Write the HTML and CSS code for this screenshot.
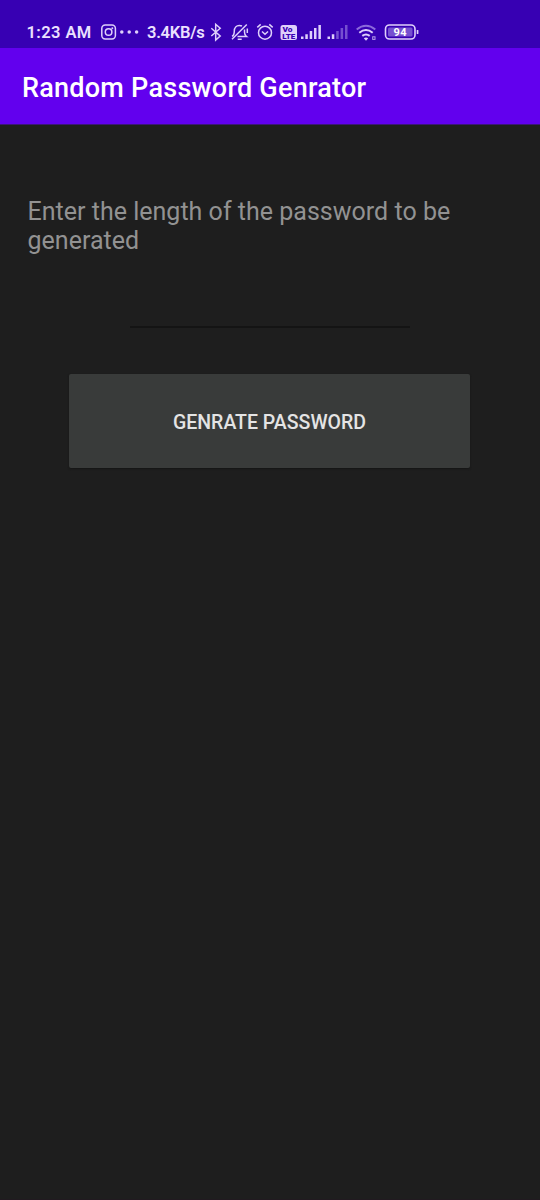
FILE: index.html
```html
<!DOCTYPE html>
<html lang="en">
<head>
<meta charset="utf-8">
<title>Random Password Genrator</title>
<link rel="stylesheet" href="styles.css">
</head>
<body>
<header class="status">
  <span class="clock">1:23 AM</span>
  <svg class="notices" width="40" height="18" viewBox="100 23 40 18">
    <g class="line">
      <rect x="101.8" y="25" width="13.6" height="14" rx="3.4"/>
      <circle cx="108.6" cy="32" r="3.3"/>
    </g>
    <g class="fill">
      <circle cx="112.3" cy="28.2" r="1"/>
      <circle cx="121.8" cy="32" r="1.75"/>
      <circle cx="129.2" cy="32" r="1.75"/>
      <circle cx="136.6" cy="32" r="1.75"/>
    </g>
  </svg>
  <span class="speed">3.4KB/s</span>
  <svg class="symbols" width="212" height="20" viewBox="209 22 212 20">
    <path class="line" d="M211.3 28.3l8.9 7.7-4.5 4V24.300l4.500 4-8.900 7.700"/>
    <g class="line">
      <path d="M232 39.300 246.800 24.500M232 36.300c2-.8 2.300-2.500 2.300-5.300 0-3.500 2.200-5.600 5-5.600 1 0 1.900.2 2.700.6M244.500 29.500v2.800c0 2 .4 3 2 4.200H237.500M237.700 39.300h4M247.300 28.500v4.500"/>
    </g>
    <g class="line">
      <circle cx="265" cy="32.700" r="6.500"/>
      <path d="M257.300 27.400l3.400-3M272.700 27.400l-3.400-3M262 31.500l3 2.800 3-2.800"/>
    </g>
    <rect class="fill" x="280.500" y="25" width="16.500" height="15" rx="2.500"/>
    <text class="volte" x="282.500" y="31.700" textLength="10" lengthAdjust="spacingAndGlyphs">Vo</text>
    <text class="volte" x="282.300" y="38.500" textLength="13" lengthAdjust="spacingAndGlyphs">LTE</text>
    <g class="fill">
      <path d="M301 36.500h2.500v2.500h-2.500zM305.300 34.300h2.500V39h-2.500zM309.700 31h2.500v8h-2.500zM314 28h2.500v11H314zM318.400 25h2.500v14h-2.500z"/>
      <path d="M327.500 36.500h2.500v2.500h-2.500zM331.800 34.300h2.500V39h-2.500z"/>
      <path class="faint" d="M336.200 31h2.500v8h-2.500zM340.600 28h2.500v11h-2.500zM345 25h2.500v14H345z"/>
    </g>
    <g class="wifi">
      <path class="dim" d="M356.700 29.500q9.300-7.500 18.600 0"/>
      <path d="M359.300 32.700q6.700-5.400 13.400 0M362.300 35.900q3.700-2.900 7.400 0"/>
    </g>
    <path class="fill" d="M363.800 38.300q2.200-1.700 4.400 0l-2.200 2.400z"/>
    <rect class="tiny" x="372.700" y="36.800" width="2.300" height="2.600"/>
    <rect class="battery" x="385.500" y="25" width="29.500" height="14" rx="4"/>
    <rect class="charge" x="388" y="27.500" width="24.500" height="9" rx="1.500"/>
    <text class="level" x="393.500" y="36.200" textLength="13">94</text>
    <rect class="fill" x="416.700" y="30" width="1.700" height="4" rx=".5"/>
  </svg>
</header>
<div class="appbar"><h1>Random Password Genrator</h1></div>
<main class="content">
  <label class="prompt" for="length">Enter the length of the password to be generated</label>
  <input class="length" id="length" type="text" inputmode="numeric">
  <button class="generate" type="button">GENRATE PASSWORD</button>
</main>
</body>
</html>
```
FILE: styles.css
```css
* { box-sizing: border-box; }
body {
  margin: 0;
  min-height: 1200px;
  display: flex;
  flex-direction: column;
  background: #1e1e1e;
  font-family: Roboto, sans-serif;
}
.status {
  height: 48px;
  padding: 16px 0 0 26.5px;
  display: flex;
  align-items: center;
  background: #3700b3;
  color: #ebe0ff;
  font-size: 16.5px;
  font-weight: 600;
  white-space: nowrap;
}
.clock { width: 73.5px; padding-top: 1px; letter-spacing: .4px; }
.speed { width: 62px; padding-top: 1px; margin-left: 7px; letter-spacing: -.25px; }
.notices, .symbols { display: block; flex: none; }
.line { fill: none; stroke: #dfd0fb; stroke-width: 1.5; }
.fill { fill: #dfd0fb; }
.faint { fill: #7650d0; }
.wifi { fill: none; stroke: #dfd0fb; stroke-width: 2; }
.wifi .dim { stroke: #8c6adb; }
.tiny { fill: none; stroke: #b69ee9; stroke-width: 1; }
.volte { fill: #3700b3; font-size: 7.5px; font-weight: 900; }
.battery { fill: none; stroke: #dfd0fb; stroke-width: 1.6; }
.charge { fill: #7650d0; }
.level { fill: #fff; font-size: 11px; font-weight: 700; }
.appbar {
  height: 77px;
  padding-left: 22px;
  display: flex;
  align-items: center;
  background: #6200ee;
  border-bottom: 1px solid #3c1678;
}
.appbar h1 {
  margin: 4px 0 0;
  color: #fff;
  font-size: 27px;
  font-weight: 500;
  letter-spacing: .25px;
  white-space: nowrap;
}
.content {
  flex: 1;
  display: flex;
  flex-direction: column;
  align-items: center;
  border-bottom: 1px solid #211a20;
}
.prompt {
  width: 485px;
  margin-top: 72px;
  color: #929292;
  font-size: 25px;
  line-height: 29px;
  letter-spacing: .015px;
}
.length {
  width: 280px;
  height: 46px;
  margin-top: 27px;
  padding: 0;
  border: 0;
  border-bottom: 2px solid #141414;
  background: transparent;
  color: #e0e0e0;
  font: 24px Roboto, sans-serif;
}
.generate {
  width: 401px;
  height: 94px;
  margin: 46px 1px 0 0;
  padding: 2px 0 0;
  border: 0;
  border-radius: 2px;
  background: #393b3a;
  box-shadow: 0 1px 2px #151515;
  color: #e4e4e4;
  font: 500 19.5px Roboto, sans-serif;
}
```
